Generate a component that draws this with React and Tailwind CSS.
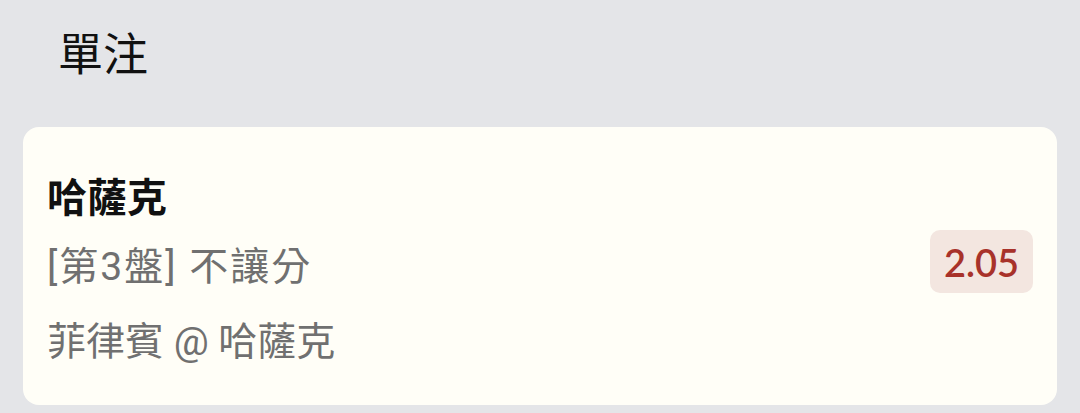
export default function App() {
  const cjk = { fontFamily: 'Roboto, "Noto Sans CJK TC", "Noto Sans", sans-serif' }

  return (
    <div className="min-h-screen w-full bg-[#e4e5e8] pb-2" style={cjk}>
      {/* Header */}
      <div className="pt-[26px] pl-[58px] h-[127px]">
        <h1 className="text-[45px] leading-[60px] text-[#111] font-normal">單注</h1>
      </div>

      {/* Bet card */}
      <div className="mx-[23px] bg-[#fffef7] rounded-2xl px-6 pt-[42px] pb-[33px] flex justify-between">
        <div className="flex flex-col">
          <div className="h-[60px] leading-[60px] text-[40px] font-bold text-[#111]">哈薩克</div>
          <div className="mt-2 h-[60px] leading-[60px] text-[39px] tracking-[2px] text-[#707070]">[第3盤] 不讓分</div>
          <div className="mt-[15px] h-[60px] leading-[60px] text-[39px] text-[#707070]">菲律賓 @ 哈薩克</div>
        </div>
        <div className="self-start mt-[61px]">
          <div className="w-[103px] h-[63px] rounded-[10px] bg-[#f3e6e0] flex items-center justify-center">
            <span className="text-[38px] font-semibold text-[#a8322a] leading-none" style={{ fontFamily: 'Lato, "Noto Sans", sans-serif' }}>
              2.05
            </span>
          </div>
        </div>
      </div>
    </div>
  )
}
